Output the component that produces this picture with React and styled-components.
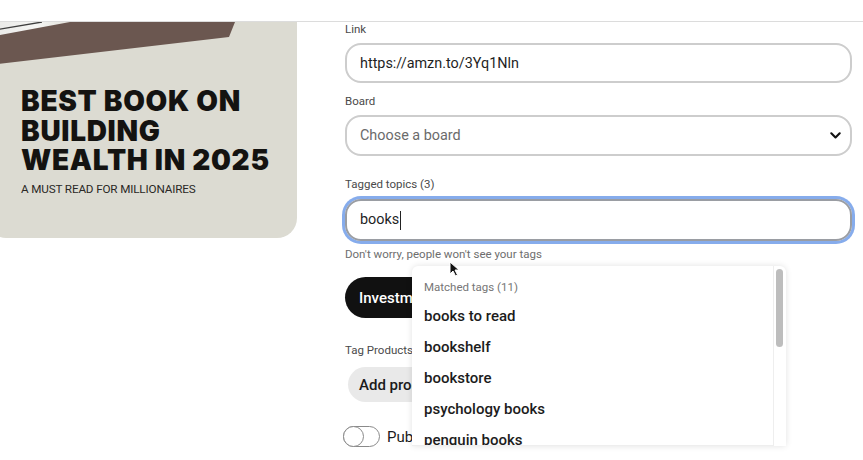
import React from "react";
import styled, { createGlobalStyle } from "styled-components";

const Global = createGlobalStyle`
  html, body { margin: 0; padding: 0; background: #fff; }
  body { width: 863px; height: 460px; overflow: hidden; font-family: Roboto, "Liberation Sans", sans-serif; }
  * { box-sizing: border-box; }
`;

const Page = styled.div`
  position: relative;
  width: 863px;
  height: 460px;
  overflow: hidden;
  display: flex;
  flex-direction: column;
`;

const TopBar = styled.div`
  height: 22px;
  flex: none;
  border-bottom: 1px solid #dcdcdc;
  overflow: hidden;
`;

const TopText = styled.div`
  margin-top: -10px;
  margin-left: -6px;
  font-size: 11px;
  color: #777;
`;

const Main = styled.div`
  display: flex;
  flex: 1;
  min-height: 0;
`;

const ImageCol = styled.div`
  width: 297px;
  flex: none;
  overflow: hidden;
`;

const Card = styled.div`
  position: relative;
  margin-left: -14px;
  width: 311px;
  height: 216px;
  background: #dcdbd2;
  border-radius: 0 0 20px 20px;
  overflow: hidden;
  padding: 65px 0 0 35px;
`;

const Stripe = styled.svg`
  position: absolute;
  top: 0;
  left: 0;
`;

const Headline = styled.h1`
  position: relative;
  margin: 0;
  font-family: Inter, "Liberation Sans", sans-serif;
  font-weight: 900;
  font-size: 28px;
  line-height: 29.5px;
  letter-spacing: 0.7px;
  color: #141311;
`;

const Subline = styled.div`
  margin-top: 6px;
  font-family: Roboto, "Liberation Sans", sans-serif;
  font-size: 11.7px;
  letter-spacing: -0.15px;
  color: #2a2826;
`;

const FormCol = styled.div`
  flex: 1;
  padding: 0 11px 0 48px;
  display: flex;
  flex-direction: column;
`;

const Label = styled.div`
  font-size: 11.5px;
  line-height: 14px;
  color: #4a4a4a;
  margin-top: ${(p) => p.$top || 0}px;
  margin-bottom: 7px;
  white-space: nowrap;
`;

const Field = styled.div`
  position: relative;
  height: ${(p) => p.$h || 40}px;
  border: 2px solid ${(p) => (p.$focus ? "#9a9da3" : "#cdcdcd")};
  border-radius: 16px;
  display: flex;
  align-items: center;
  padding: 0 9px 0 13px;
  font-size: 14.4px;
  color: ${(p) => (p.$muted ? "#6b6b6b" : "#1f1f1f")};
  box-shadow: ${(p) => (p.$focus ? "0 0 0 3px #86acec" : "none")};
  margin-top: ${(p) => (p.$focus ? 1 : 0)}px;
`;

const FieldText = styled.span`
  flex: 1;
  white-space: nowrap;
`;

const Caret = styled.span`
  display: inline-block;
  width: 1px;
  height: 19px;
  background: #222;
  vertical-align: middle;
  margin-left: 1px;
`;

const Helper = styled.div`
  margin-top: 6px;
  font-size: 11.5px;
  line-height: 14px;
  color: #6e6e6e;
`;

const Pill = styled.div`
  align-self: flex-start;
  display: flex;
  align-items: center;
  height: ${(p) => p.$h}px;
  border-radius: ${(p) => p.$h / 2}px;
  padding: 0 ${(p) => p.$pad}px;
  margin-left: ${(p) => p.$ml || 0}px;
  margin-top: ${(p) => p.$top || 0}px;
  background: ${(p) => (p.$dark ? "#111" : "#e9e9e9")};
  color: ${(p) => (p.$dark ? "#fff" : "#1b1b1b")};
  font-size: 15px;
  font-weight: 500;
  white-space: nowrap;
`;

const ToggleRow = styled.div`
  display: flex;
  align-items: center;
  gap: 7px;
  margin-top: 24px;
  margin-left: -2px;
  font-size: 15px;
  color: #1b1b1b;
`;

const Toggle = styled.div`
  width: 37px;
  height: 21px;
  border: 1px solid #8a8a8a;
  border-radius: 11px;
  position: relative;
  &::before {
    content: "";
    position: absolute;
    left: -1px;
    top: -1px;
    width: 21px;
    height: 21px;
    border-radius: 50%;
    border: 1px solid #8a8a8a;
    background: #fff;
    box-sizing: border-box;
  }
`;

const Dropdown = styled.div`
  position: absolute;
  left: 65px;
  top: calc(100% + 27px);
  width: 374px;
  height: 180px;
  background: #fff;
  border-radius: 6px 6px 0 0;
  box-shadow: 0 0 6px rgba(0, 0, 0, 0.12);
  display: flex;
  z-index: 5;
`;

const List = styled.div`
  flex: 1;
  border-right: 1px solid #eee;
  border-bottom: 1px solid #eee;
  padding: 14px 0 0 12px;
  overflow: hidden;
`;

const ListHead = styled.div`
  font-size: 11.5px;
  line-height: 14px;
  color: #767676;
  margin-bottom: 7px;
`;

const Item = styled.div`
  font-size: 15px;
  font-weight: 500;
  line-height: 31px;
  color: #1c1c1c;
  white-space: nowrap;
`;

const Track = styled.div`
  width: 12px;
  flex: none;
  padding: 3px 2px 0 2px;
`;

const Thumb = styled.div`
  width: 7px;
  height: 78px;
  border-radius: 4px;
  background: #bdbdbd;
`;

const Cursor = styled.svg`
  position: absolute;
  left: 449px;
  top: 261px;
  z-index: 10;
`;

const Chevron = () => (
  <svg width="11" height="7" viewBox="0 0 11 7">
    <path d="M1.3 1.3 L5.5 5.5 L9.7 1.3" fill="none" stroke="#111" strokeWidth="2.1" strokeLinecap="round" strokeLinejoin="round" />
  </svg>
);

const items = ["books to read", "bookshelf", "bookstore", "psychology books", "penguin books"];

export default function App() {
  return (
    <>
      <Global />
      <Page>
        <TopBar>
          <TopText>File</TopText>
        </TopBar>
        <Main>
          <ImageCol>
            <Card>
              <Stripe width="311" height="70" viewBox="0 0 311 70">
                <defs>
                  <linearGradient id="lg" x1="0" y1="0" x2="1" y2="0">
                    <stop offset="0" stopColor="#e6e6e4" />
                    <stop offset="0.5" stopColor="#f5f5f3" />
                    <stop offset="1" stopColor="#dcdbd2" />
                  </linearGradient>
                </defs>
                <polygon points="0,0 100,0 0,17" fill="url(#lg)" />
                <line x1="0" y1="9.5" x2="56" y2="0" stroke="#3e3e3e" strokeWidth="1.3" />
                <polygon points="0,15.6 84,0 249,0 243,15 0,43.5" fill="#6b5750" />
              </Stripe>
              <Headline>
                BEST BOOK ON
                <br />
                BUILDING
                <br />
                WEALTH IN 2025
              </Headline>
              <Subline>A MUST READ FOR MILLIONAIRES</Subline>
            </Card>
          </ImageCol>
          <FormCol>
            <Label>Link</Label>
            <Field>
              <FieldText>https://amzn.to/3Yq1Nln</FieldText>
            </Field>
            <Label $top={11}>Board</Label>
            <Field $h={41} $muted>
              <FieldText>Choose a board</FieldText>
              <Chevron />
            </Field>
            <Label $top={21}>Tagged topics (3)</Label>
            <Field $h={42} $focus>
              <FieldText>
                books
                <Caret />
              </FieldText>
              <Dropdown>
                <List>
                  <ListHead>Matched tags (11)</ListHead>
                  {items.map((t) => (
                    <Item key={t}>{t}</Item>
                  ))}
                </List>
                <Track>
                  <Thumb />
                </Track>
              </Dropdown>
            </Field>
            <Helper>Don't worry, people won't see your tags</Helper>
            <Pill $dark $h={41} $pad={14} $top={16}>
              Investments
            </Pill>
            <Label $top={25}>Tag Products</Label>
            <Pill $h={35} $pad={11} $ml={3} $top={3}>
              Add products
            </Pill>
            <ToggleRow>
              <Toggle />
              Publish
            </ToggleRow>
          </FormCol>
        </Main>
        <Cursor width="12" height="16" viewBox="0 0 12 16">
          <path d="M1 1 L1 13 L4 10 L6.5 15 L8.5 14 L6 9 L10 9 Z" fill="#111" stroke="#fff" strokeWidth="1" strokeLinejoin="round" />
        </Cursor>
      </Page>
    </>
  );
}
